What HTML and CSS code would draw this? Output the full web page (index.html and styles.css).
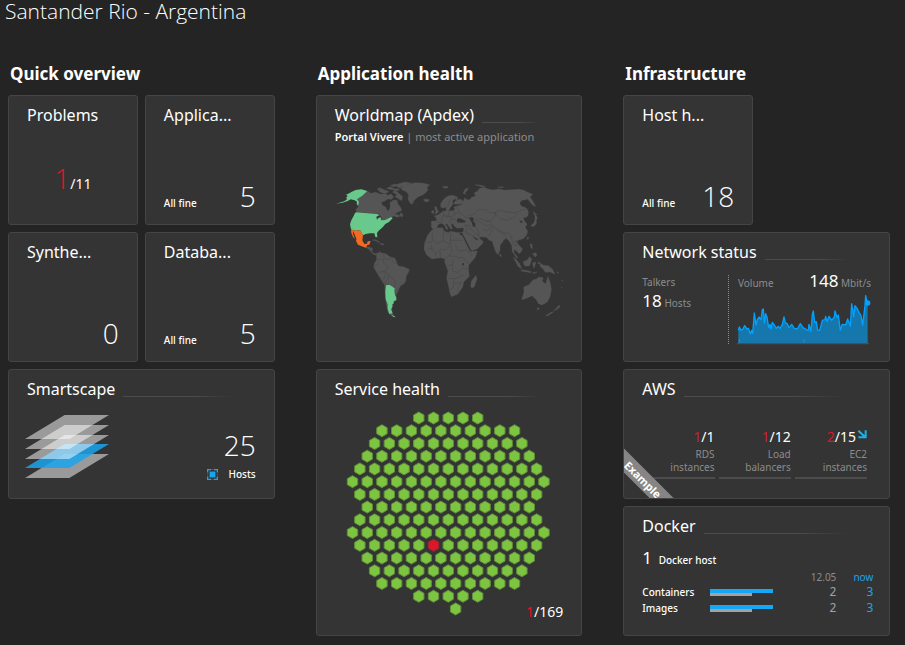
FILE: index.html
```html
<!DOCTYPE html>
<html lang="en">
<head>
<meta charset="utf-8">
<meta name="viewport" content="width=device-width, initial-scale=1">
<title>Santander Rio - Argentina</title>
<link rel="stylesheet" href="styles.css">
</head>
<body>
<header class="page-header"><h1>Santander Rio - Argentina</h1></header>
<main class="board">
  <section class="column">
    <h2>Quick overview</h2>
    <div class="tiles">
      <article class="tile">
        <h3>Problems</h3>
        <p class="ratio ratio-large"><span class="bad">1</span>/11</p>
      </article>
      <article class="tile">
        <h3>Applica...</h3>
        <div class="status"><span class="note">All fine</span><span class="count">5</span></div>
      </article>
      <article class="tile">
        <h3>Synthe...</h3>
        <div class="status"><span class="note"></span><span class="count">0</span></div>
      </article>
      <article class="tile">
        <h3>Databa...</h3>
        <div class="status"><span class="note">All fine</span><span class="count">5</span></div>
      </article>
      <article class="tile wide">
        <h3 class="ruled">Smartscape</h3>
        <div class="smartscape">
          <svg class="layers" viewBox="0 0 252 189" aria-hidden="true">
            <g fill="#fff" fill-opacity=".5">
              <path d="M0 189 119 117H252L133 189Z"/>
              <path d="M0 159 119 87H252L133 159Z" fill="#1ba4ee" fill-opacity=".85"/>
              <path d="M0 132 119 60H252L133 132Z"/>
              <path d="M0 102 119 30H252L133 102Z"/>
              <path d="M0 72 119 0H252L133 72Z"/>
            </g>
          </svg>
          <div class="hosts">
            <span class="count">25</span>
            <span class="hosts-label">
              <svg class="host-icon" viewBox="0 0 34 34" aria-hidden="true">
                <path d="M8 8H26V26H8Z" fill="#1ba4ee"/>
                <path d="M2 11V2H13M21 2H32V11M32 23V32H21M13 32H2V23" fill="none" stroke="#1ba4ee" stroke-width="4"/>
                <path d="M2 14V20M32 14V20M14 2H20M14 32H20" stroke="#176f9e" stroke-width="3"/>
              </svg>
              Hosts
            </span>
          </div>
        </div>
      </article>
    </div>
  </section>

  <section class="column">
    <h2>Application health</h2>
    <div class="tiles">
      <article class="tile large">
        <h3 class="ruled">Worldmap (Apdex)</h3>
        <p class="subtitle"><strong>Portal Vivere</strong> | most active application</p>
        <svg class="map" viewBox="0 0 690 480" role="img" aria-label="World map">
          <g fill="#555" stroke="#555" stroke-width="1" stroke-linejoin="round">
            <!-- North America -->
            <path d="M97 63 108 70 122 67 138 73 150 70 158 76 168 72 176 80 170 88 158 87 150 93 139 97 142 106 153 112 157 123 163 119 166 109 164 99 174 91 185 90 190 104 197 112 200 122 190 126 178 131 190 134 196 139 184 142 178 138 168 142 150 152 142 151 138 139 129 132 66 126 62 119 72 108 72 95 66 88 80 78Z"/>
            <path d="M130 62 140 56 152 61 162 65 152 70 140 68ZM154 55 166 50 178 55 168 59ZM172 66 182 62 194 72 203 80 200 92 190 86 180 80 186 74ZM166 46 182 42 190 46 176 50ZM188 42 210 36 230 39 216 44 202 49 192 54 184 49ZM170 57 190 56 194 61 178 62ZM126 58 134 53 140 55 132 60Z"/>
            <path d="M196 128 204 133 202 141 195 137Z"/>
            <path d="M196 53 210 45 226 42 240 38 262 39 285 44 276 52 279 60 271 69 263 75 250 80 241 88 236 94 232 103 225 99 219 88 221 75 214 65 202 60Z"/>
            <path d="M265 90 270 87 276 88 283 89 281 94 272 96Z"/>
            <path d="M91 231 100 230 112 235 111 247 120 251 126 250 122 256 114 252 103 239Z"/>
            <path d="M112 210 122 209 134 216 131 218 122 212ZM137 219 147 222 146 225 136 223Z"/>
            <!-- South America -->
            <path d="M124 251 134 246 140 249 152 251 165 260 180 265 186 279 190 288 205 290 223 298 220 308 214 317 212 334 206 342 196 348 190 362 184 374 181 383 177 395 171 410 171 429 181 441 169 438 159 427 154 405 151 380 149 345 139 330 125 307 116 292 118 280 125 270Z"/>
            <!-- Africa -->
            <path d="M290 181 306 174 323 173 327 183 340 188 346 184 372 188 384 187 383 193 393 218 407 244 427 243 421 262 401 286 401 303 403 319 386 336 383 351 369 372 349 380 344 366 341 350 335 325 339 303 329 277 330 267 317 263 291 267 275 255 267 237 269 218 278 195Z"/>
            <path d="M407 350 409 334 419 320 423 316 426 326 418 350 411 354Z"/>
            <!-- Europe and Asia -->
            <path d="M289 171 289 153 304 153 304 144 298 138 310 134 325 123 334 123 333 113 340 114 341 122 353 122 360 118 356 111 368 107 378 105 386 91 389 83 396 89 404 89 410 82 422 78 417 69 427 64 434 55 447 52 459 57 475 60 490 57 510 61 530 59 552 58 567 61 576 66 593 73 585 81 592 91 602 109 596 107 586 99 578 90 558 92 554 101 560 109 574 114 580 124 579 137 571 143 565 142 567 151 576 163 572 170 563 164 562 153 553 150 556 158 566 160 572 174 578 184 575 195 565 206 553 209 548 213 541 209 551 224 562 236 560 244 552 251 545 243 538 238 537 248 549 263 545 265 532 245 530 226 522 212 513 205 506 211 495 227 495 240 489 254 482 245 475 225 472 214 463 211 454 202 438 200 433 204 445 215 441 223 427 236 410 242 405 239 391 210 381 191 386 181 386 173 366 175 358 169 353 160 348 166 353 177 347 177 336 161 331 162 339 175 335 180 328 165 319 160 309 164 305 175 295 179Z"/>
            <path d="M317 101 322 93 329 85 339 78 352 76 367 80 367 89 359 87 352 92 354 103 347 111 342 121 336 119 334 111 323 115 317 111ZM361 103 356 101 360 94 367 89 378 88 385 95 377 102Z"/>
            <path d="M298 112 303 109 307 118 311 127 299 133 303 123ZM290 123 297 121 296 130 290 130ZM384 70 390 58 400 53 396 62 390 68 392 73ZM322 50 339 49 337 54 328 55ZM420 44 440 46 452 50 440 50ZM488 51 505 50 502 54Z"/>
            <path d="M600 135 607 142 604 154 604 163 594 170 587 167 597 158 600 148ZM595 124 601 131 607 134 598 136ZM575 208 579 199 581 207ZM585 221 591 223 593 237 588 234ZM592 251 603 248 606 256 601 261Z"/>
            <path d="M494 251 498 253 499 260 495 259ZM534 261 543 268 554 281 560 296 550 290 542 276ZM559 299 572 301 589 305 588 308 571 305 559 303ZM565 275 578 269 584 260 590 266 587 278 583 288 570 288 566 282ZM593 278 603 276 600 286 598 295 594 288ZM592 308 606 306 598 311ZM614 278 625 286 640 287 652 297 660 313 646 306 631 307 624 297 616 290ZM610 274 614 281 609 281Z"/>
            <!-- Oceania -->
            <path d="M560 389 567 365 566 351 582 344 594 330 606 326 611 321 625 323 621 333 632 342 639 319 647 343 649 360 645 380 637 396 621 405 610 401 604 389 591 377 575 385ZM606 414 614 414 608 421ZM632 437 651 425 655 427 637 438ZM655 423 665 414 672 405 675 410 667 418Z"/>
            <path d="M666 305 672 309 666 308ZM680 330 684 334 681 334ZM679 351 683 355 680 354Z"/>
          </g>
          <!-- Inland seas and gulfs -->
          <path fill="#343434" d="M366 148 372 144 380 147 391 152 392 157 380 158 366 157ZM402 144 412 141 417 148 413 153 421 160 421 170 414 170 410 157ZM425 211 417 204 413 197 421 204 430 207ZM382 280 387 279 386 287 381 286ZM373 190 376 196 381 195 404 241 411 246 408 240 386 197 381 188ZM559 93 578 88 588 101 579 104 574 112 561 107ZM126 135 138 141 133 149 132 142Z"/>
          <!-- Borders -->
          <g fill="none" stroke="#454545" stroke-width="1.5">
            <path d="M292 187 292 215 271 219M292 206 306 220 324 213 326 181M324 213 346 223 347 188M346 211 382 211M278 236 291 235 302 250 317 237 331 241 347 225 352 242 341 258 331 265M361 226 370 243 397 240 410 256M340 258 360 259 370 263 386 263 401 283M335 288 352 284 356 267M352 284 353 304 371 307 382 295 401 298M341 325 359 326 370 323 387 314M357 326 354 355 341 358M357 340 380 337 368 352 370 371M302 249 303 263M315 240 316 262M289 223 291 240"/>
            <path d="M126 270 145 267 147 281 160 292 150 304 132 307M145 252 148 266 160 269 167 263M171 265 173 275 187 282M151 304 163 316 181 334 179 353M151 306 149 324 142 327M153 345 165 341M191 354 184 373M161 315 160 326 150 341M132 280 118 289M105 234 107 242"/>
            <path d="M387 166 402 166 406 177 419 188 434 198M396 168 393 185 425 204M386 181 400 195M401 137 418 132 430 118 451 119 464 128 483 128 477 142 465 153 452 153 437 145 421 148 417 157M424 152 438 157 450 167 467 165 485 176 505 188 522 190 535 202M480 127 493 120 515 126 543 128 559 120 574 117M479 129 495 146 518 151 540 140 548 129M452 154 465 153 475 163M445 179 457 183 472 166M419 169 430 180 432 199M458 201 466 189 474 175M486 180 506 192 516 202M526 197 532 211 543 221 548 214M529 213 539 227 552 225M324 125 326 137 320 144 320 155M340 122 342 139 350 146 365 149M356 120 360 133 351 139 331 142M365 108 373 127 390 141 402 144M371 126 360 133M326 137 340 139M351 146 345 158M304 155 319 159M345 87 340 105 336 111M359 87 365 79"/>
          </g>
          <!-- Rated countries -->
          <path fill="#69c98c" d="M3 101 28 94 37 87 33 84 38 78 33 74 43 70 49 66 62 60 79 58 97 63 82 77 66 88 72 95 70 108 65 102 66 95 59 91 47 88 38 93 23 98ZM64 127 126 132 133 136 124 140 126 149 130 144 137 142 139 151 151 150 168 141 173 145 162 156 151 162 143 172 131 182 126 189 127 202 121 201 118 190 104 190 92 192 84 196 75 181 59 182 48 178 45 163 49 151 57 136 60 129ZM153 346 163 344 179 355 178 363 180 376 184 382 184 391 176 394 176 400 171 404 173 409 168 418 173 430 163 432 158 417 158 403 152 388 151 366ZM170 434 182 442 175 441Z"/>
          <path fill="#f26a21" d="M48 178 59 182 75 181 84 196 82 211 88 222 96 221 98 214 107 213 103 224 97 225 93 233 84 230 69 224 63 213 64 206 54 182 54 191 60 208 54 201 49 189Z"/>
        </svg>
      </article>
      <article class="tile large">
        <h3 class="ruled">Service health</h3>
        <svg class="honeycomb" viewBox="0 0 204 205" role="img" aria-label="169 services, 1 with problems"></svg>
        <p class="ratio service-ratio"><span class="bad">1</span>/169</p>
      </article>
    </div>
  </section>

  <section class="column">
    <h2>Infrastructure</h2>
    <div class="tiles">
      <article class="tile">
        <h3>Host h...</h3>
        <div class="status"><span class="note">All fine</span><span class="count">18</span></div>
      </article>
      <article class="tile wide">
        <h3 class="ruled">Network status</h3>
        <div class="network">
          <div class="talkers">
            <p class="caption">Talkers</p>
            <p class="caption"><span class="figure">18</span> Hosts</p>
          </div>
          <div class="volume">
            <p class="caption volume-head"><span>Volume</span><span><span class="figure">148</span> Mbit/s</span></p>
            <svg class="chart" viewBox="24 12 402 156" role="img" aria-label="Network volume">
              <path d="M28 163V124L31 114 36 124 42 120 47 110 54 120 58 118 64 134 68 124 71 134 76 72 81 108 85 92 90 84 96 92 100 62 103 60 106 102 110 74 114 84 119 116 123 106 126 120 130 100 136 108 142 118 148 112 153 118 160 106 165 84 169 102 175 104 180 116 188 106 196 118 205 120 214 104 222 116 232 122 238 124 240 106 246 128 250 76 253 66 257 100 262 98 266 124 272 124 280 94 288 92 290 82 294 98 300 82 308 94 316 84 318 66 324 86 328 78 334 124 340 106 350 108 356 90 364 112 368 44 374 84 378 50 384 58 390 70 396 80 401 108 408 50 410 20 413 34 416 42V163Z" fill="#1577ac"/>
              <path d="M28 124 31 114 36 124 42 120 47 110 54 120 58 118 64 134 68 124 71 134 76 72 81 108 85 92 90 84 96 92 100 62 103 60 106 102 110 74 114 84 119 116 123 106 126 120 130 100 136 108 142 118 148 112 153 118 160 106 165 84 169 102 175 104 180 116 188 106 196 118 205 120 214 104 222 116 232 122 238 124 240 106 246 128 250 76 253 66 257 100 262 98 266 124 272 124 280 94 288 92 290 82 294 98 300 82 308 94 316 84 318 66 324 86 328 78 334 124 340 106 350 108 356 90 364 112 368 44 374 84 378 50 384 58 390 70 396 80 401 108 408 50 410 20 413 34 416 42" fill="none" stroke="#00a1ff" stroke-width="4" stroke-linejoin="round"/>
              <path d="M31 150V162M225 150V162" stroke="#2a86b8" stroke-width="4"/>
              <path d="M24 164H420" stroke="#4d4d4d" stroke-width="4"/>
              <circle cx="416" cy="42" r="8" fill="#00a1ff"/>
            </svg>
          </div>
        </div>
      </article>
      <article class="tile wide aws">
        <h3 class="ruled">AWS</h3>
        <div class="aws-stats">
          <div class="stat"><p class="ratio"><span class="bad">1</span>/1</p><p class="caption">RDS<br>instances</p></div>
          <div class="stat"><p class="ratio"><span class="bad">1</span>/12</p><p class="caption">Load<br>balancers</p></div>
          <div class="stat"><p class="ratio"><span class="bad">2</span>/15<svg class="trend" viewBox="0 0 30 30" aria-hidden="true"><path d="M4 5 22 22M26 4V25H4" fill="none" stroke="#14b4f0" stroke-width="6"/></svg></p><p class="caption">EC2<br>instances</p></div>
        </div>
        <span class="ribbon">Example</span>
      </article>
      <article class="tile wide">
        <h3 class="ruled">Docker</h3>
        <p class="docker-host"><span class="figure">1</span> Docker host</p>
        <table class="docker">
          <thead><tr><td></td><td></td><th scope="col">12.05</th><th scope="col" class="now">now</th></tr></thead>
          <tbody>
            <tr><th scope="row">Containers</th><td><div class="bar bar-now"></div><div class="bar bar-before"></div></td><td>2</td><td class="now">3</td></tr>
            <tr><th scope="row">Images</th><td><div class="bar bar-now"></div><div class="bar bar-before"></div></td><td>2</td><td class="now">3</td></tr>
          </tbody>
        </table>
      </article>
    </div>
  </section>
</main>
<script src="honeycomb.js"></script>
</body>
</html>
```
FILE: styles.css
```css
* { box-sizing: border-box; }

body {
  margin: 0;
  background: #242424;
  color: #fff;
  font-family: "Noto Sans", "Open Sans", sans-serif;
  font-size: 10px;
  line-height: 13px;
}

h1, h2, h3, p { margin: 0; }

.page-header { padding-left: 5px; margin-bottom: 40px; }

h1 {
  font-family: "Open Sans", sans-serif;
  font-size: 21px;
  font-weight: 300;
  line-height: 22px;
}

.board {
  display: grid;
  grid-template-columns: repeat(3, minmax(0, 1fr));
  gap: 41px;
  padding: 0 15px 9px 8px;
}

h2 {
  font-size: 17px;
  font-weight: 700;
  line-height: 24px;
  margin: 0 0 9px 2px;
}

.tiles {
  display: grid;
  grid-template-columns: repeat(2, minmax(0, 1fr));
  grid-auto-rows: minmax(130px, auto);
  gap: 7px;
}

.tile {
  position: relative;
  display: flex;
  flex-direction: column;
  min-width: 0;
  padding: 9px 18px;
  background: #343434;
  border: 1px solid #454545;
  border-radius: 3px;
}

.wide { grid-column: span 2; }
.large { grid-column: span 2; grid-row: span 2; }

h3 {
  font-size: 16px;
  font-weight: 400;
  line-height: 20px;
  white-space: nowrap;
}

.ruled {
  display: flex;
  align-items: flex-end;
  gap: 8px;
  padding-right: 23px;
}

.ruled::after {
  content: "";
  flex: 1;
  height: 1px;
  margin-bottom: 2px;
  background: linear-gradient(to right, #4c4c4c 65%, #343434);
}

.bad { color: #dc172a; }

.ratio { font-size: 14px; line-height: 20px; }
.ratio-large { margin: auto 0 21px; text-align: center; }
.ratio-large .bad {
  font-family: "Open Sans", sans-serif;
  font-size: 28px;
  font-weight: 350;
}

.status {
  display: flex;
  align-items: baseline;
  justify-content: space-between;
  margin-top: auto;
}

.note, .hosts-label, .docker-host { font-weight: 500; }

.count {
  font-family: "Open Sans", sans-serif;
  font-size: 28px;
  font-weight: 350;
  line-height: 38px;
}

.smartscape {
  display: flex;
  justify-content: space-between;
  align-items: flex-start;
  margin: 16px 0 0 -2px;
}

.layers { width: 84px; height: 63px; }

.hosts {
  display: flex;
  flex-direction: column;
  align-items: flex-end;
  gap: 4px;
  padding-top: 11px;
}

.hosts-label { display: flex; align-items: center; gap: 11px; }
.host-icon { width: 11px; height: 11px; }

.subtitle { margin-top: 5px; font-size: 11px; color: #8c8c8c; }
.subtitle strong { color: #fff; font-weight: 600; }

.map { width: 230px; height: 160px; margin-top: 27px; }

.honeycomb { width: 204px; height: 205px; margin: 12px 0 0 11px; }
.honeycomb polygon { fill: #7dc540; stroke: #5f8f3b; stroke-width: 1; }
.honeycomb .critical { fill: #dc172a; stroke: #9c2630; }

.service-ratio { position: absolute; right: 18px; bottom: 13px; }

.caption { color: #8c8c8c; }
.figure { color: #fff; font-size: 17px; }

.network { display: flex; margin-top: 13px; }
.talkers { width: 87px; padding-top: 1px; line-height: 24px; }
.talkers .caption:first-child { line-height: 13px; }
.volume { flex: 1; border-left: 1px dotted #8c8c8c; padding-left: 9px; height: 69px; }
.volume-head { display: flex; justify-content: space-between; align-items: baseline; line-height: 14px; }
.volume-head .figure { line-height: 12px; }
.chart { display: block; width: 134px; height: 52px; margin: 3px 0 0 -1px; }

.aws { overflow: hidden; }
.aws-stats {
  display: grid;
  grid-template-columns: repeat(3, minmax(0, 1fr));
  gap: 4px;
  margin: 27px 4px 0 0;
  text-align: right;
}
.stat { border-bottom: 2px solid #4c4c4c; padding-bottom: 3px; }
.stat .ratio { line-height: 22px; white-space: nowrap; }
.trend { width: 10px; height: 10px; vertical-align: 3px; margin-left: 1px; }

.ribbon {
  position: absolute;
  left: -29px;
  bottom: 10px;
  width: 96px;
  background: #858585;
  font-size: 11px;
  font-weight: 700;
  line-height: 17px;
  text-align: center;
  transform: rotate(45deg);
}

.docker-host { margin-top: 11px; line-height: 22px; }
.docker-host .figure { font-weight: 400; margin-right: 4px; }

.docker { width: 231px; border-collapse: collapse; table-layout: fixed; }
.docker th, .docker td {
  padding: 0;
  font-size: 12px;
  font-weight: 400;
  line-height: 16px;
  color: #a3a3a3;
  text-align: right;
}
.docker thead th { font-size: 10px; line-height: 13px; color: #8c8c8c; }
.docker tbody th { font-size: 10px; font-weight: 500; color: #fff; text-align: left; }
.docker thead td:first-child { width: 68px; }
.docker thead td:nth-child(2) { width: 63px; }
.docker thead .now { width: 37px; }
.docker thead .now, .docker tbody .now { color: #1ba4ee; }
.bar { height: 4px; }
.bar-now { width: 63px; background: #14a8f5; }
.bar-before { width: 42px; height: 3px; background: #a3a3a3; }
```
FILE: honeycomb.js
```js
// Each row: horizontal offset of the first cell (in half cells) and the number of cells.
const rows = [
  [9, 5], [4, 10], [3, 11], [2, 12], [1, 13], [0, 14], [1, 13], [2, 12],
  [1, 13], [0, 14], [1, 13], [2, 12], [3, 11], [4, 10], [9, 5], [14, 1]
];
const stepX = 14.73;
const stepY = 12.73;
const comb = document.querySelector(".honeycomb");

rows.forEach(([offset, count], row) => {
  for (let i = 0; i < count; i++) {
    const x = 6.5 + (offset * stepX) / 2 + i * stepX;
    const y = 7 + row * stepY;
    const cell = document.createElementNS("http://www.w3.org/2000/svg", "polygon");
    const corners = [[0, -6], [5.2, -3], [5.2, 3], [0, 6], [-5.2, 3], [-5.2, -3]];
    cell.setAttribute("points", corners.map(([dx, dy]) => `${x + dx},${y + dy}`).join(" "));
    if (row === 10 && i === 5) cell.classList.add("critical");
    comb.append(cell);
  }
});
```
